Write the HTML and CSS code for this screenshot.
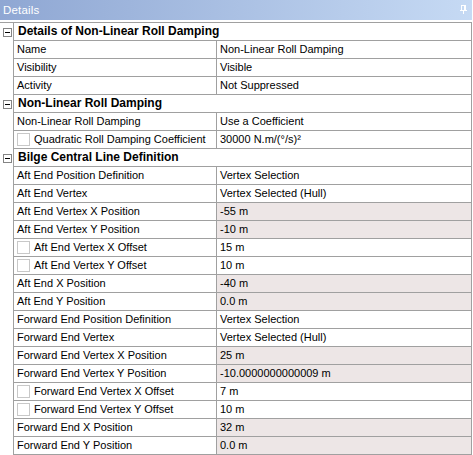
FILE: index.html
```html
<!DOCTYPE html>
<html>
<head>
<meta charset="utf-8">
<link rel="stylesheet" href="styles.css">
</head>
<body>
<div class="panel">
  <div class="titlebar">
    <span class="title">Details</span>
    <svg class="pin" width="7" height="9" viewBox="0 0 7 9">
      <rect x="1.5" y="0.5" width="4" height="5" fill="none" stroke="#fff"/>
      <rect x="4" y="0" width="2" height="6" fill="#fff"/>
      <rect x="0" y="5" width="7" height="1" fill="#fff"/>
      <rect x="3" y="6" width="1" height="3" fill="#fff"/>
    </svg>
  </div>
  <div class="grid">
    <div class="row hdr"><div class="exp"><span class="box"></span></div><div class="hcell">Details of Non-Linear Roll Damping</div></div>
    <div class="row"><div class="exp"></div><div class="name">Name</div><div class="val">Non-Linear Roll Damping</div></div>
    <div class="row"><div class="exp"></div><div class="name">Visibility</div><div class="val">Visible</div></div>
    <div class="row"><div class="exp"></div><div class="name">Activity</div><div class="val">Not Suppressed</div></div>
    <div class="row hdr"><div class="exp"><span class="box"></span></div><div class="hcell">Non-Linear Roll Damping</div></div>
    <div class="row"><div class="exp"></div><div class="name">Non-Linear Roll Damping</div><div class="val">Use a Coefficient</div></div>
    <div class="row"><div class="exp"></div><div class="name"><span class="chk"></span>Quadratic Roll Damping Coefficient</div><div class="val">30000 N.m/(°/s)²</div></div>
    <div class="row hdr"><div class="exp"><span class="box"></span></div><div class="hcell">Bilge Central Line Definition</div></div>
    <div class="row"><div class="exp"></div><div class="name">Aft End Position Definition</div><div class="val">Vertex Selection</div></div>
    <div class="row"><div class="exp"></div><div class="name">Aft End Vertex</div><div class="val">Vertex Selected (Hull)</div></div>
    <div class="row"><div class="exp"></div><div class="name">Aft End Vertex X Position</div><div class="val ro">-55 m</div></div>
    <div class="row"><div class="exp"></div><div class="name">Aft End Vertex Y Position</div><div class="val ro">-10 m</div></div>
    <div class="row"><div class="exp"></div><div class="name"><span class="chk"></span>Aft End Vertex X Offset</div><div class="val">15 m</div></div>
    <div class="row"><div class="exp"></div><div class="name"><span class="chk"></span>Aft End Vertex Y Offset</div><div class="val">10 m</div></div>
    <div class="row"><div class="exp"></div><div class="name">Aft End X Position</div><div class="val ro">-40 m</div></div>
    <div class="row"><div class="exp"></div><div class="name">Aft End Y Position</div><div class="val ro">0.0 m</div></div>
    <div class="row"><div class="exp"></div><div class="name">Forward End Position Definition</div><div class="val">Vertex Selection</div></div>
    <div class="row"><div class="exp"></div><div class="name">Forward End Vertex</div><div class="val">Vertex Selected (Hull)</div></div>
    <div class="row"><div class="exp"></div><div class="name">Forward End Vertex X Position</div><div class="val ro">25 m</div></div>
    <div class="row"><div class="exp"></div><div class="name">Forward End Vertex Y Position</div><div class="val ro">-10.0000000000009 m</div></div>
    <div class="row"><div class="exp"></div><div class="name"><span class="chk"></span>Forward End Vertex X Offset</div><div class="val">7 m</div></div>
    <div class="row"><div class="exp"></div><div class="name"><span class="chk"></span>Forward End Vertex Y Offset</div><div class="val">10 m</div></div>
    <div class="row"><div class="exp"></div><div class="name">Forward End X Position</div><div class="val ro">32 m</div></div>
    <div class="row"><div class="exp"></div><div class="name">Forward End Y Position</div><div class="val ro">0.0 m</div></div>
  </div>
</div>
</body>
</html>
```
FILE: styles.css
```css
html, body {
  margin: 0;
  padding: 0;
  background: #ffffff;
}
.panel {
  width: 472px;
  font-family: "Liberation Sans", Arial, sans-serif;
  font-size: 11px;
  color: #000;
}
.titlebar {
  height: 20px;
  margin-bottom: 2px;
  background: linear-gradient(to right, #8fa7d3, #c6daf4);
  display: flex;
  align-items: center;
  justify-content: space-between;
  padding: 0 5px 0 3px;
  box-sizing: border-box;
}
.title {
  color: #ffffff;
  font-size: 11.5px;
  letter-spacing: 0.2px;
}
.pin {
  display: block;
  margin-top: -2px;
}
.grid {
  border-top: 1px solid #a0a0a0;
}
.row {
  display: grid;
  grid-template-columns: 13px 203px 256px;
  height: 18px;
}
.row.hdr {
  grid-template-columns: 13px 459px;
}
.exp {
  display: flex;
  justify-content: flex-start;
  align-items: flex-start;
}
.box {
  position: relative;
  width: 7px;
  height: 7px;
  border: 1px solid #848484;
  margin: 5px 0 0 3px;
  background: #fff;
}
.box::after {
  content: "";
  position: absolute;
  left: 1px;
  top: 3px;
  width: 5px;
  height: 1px;
  background: #000;
}
.name, .val, .hcell {
  border-left: 1px solid #a0a0a0;
  border-bottom: 1px solid #a0a0a0;
  line-height: 17px;
  white-space: nowrap;
  overflow: hidden;
  display: flex;
  align-items: center;
}
.name {
  padding-left: 3px;
}
.val {
  padding-left: 3px;
  border-right: 1px solid #a0a0a0;
}
.val.ro {
  background: #ede6e6;
}
.hcell {
  border-right: 1px solid #a0a0a0;
  padding-left: 4px;
  font-weight: bold;
  font-size: 12px;
}
.chk {
  display: inline-block;
  width: 11px;
  height: 11px;
  border: 1px solid #c8c8c8;
  margin-right: 4px;
  background: #fff;
  flex: none;
}
```
